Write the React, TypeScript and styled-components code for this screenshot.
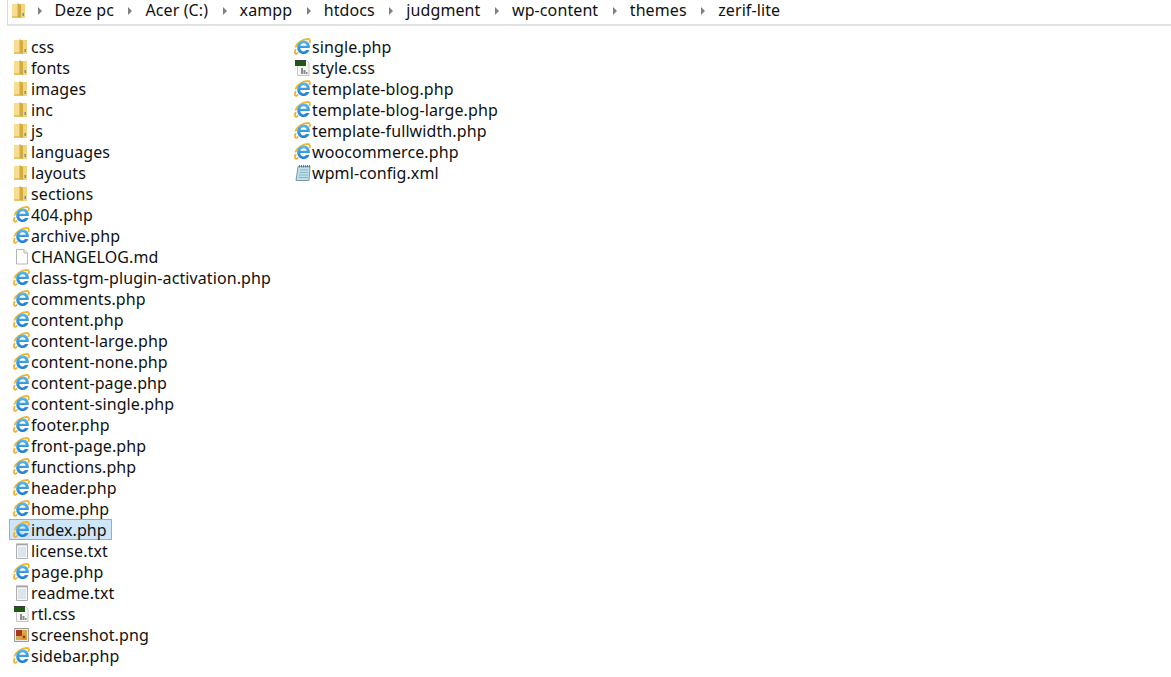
import React from "react";
import styled, { createGlobalStyle } from "styled-components";

type FileKind = "folder" | "ie" | "blank" | "text" | "css" | "image" | "xml";
type FileEntry = { name: string; kind: FileKind; selected?: boolean };

const crumbs = ["Deze pc", "Acer (C:)", "xampp", "htdocs", "judgment", "wp-content", "themes", "zerif-lite"];

const files: FileEntry[] = [
  { name: "css", kind: "folder" },
  { name: "fonts", kind: "folder" },
  { name: "images", kind: "folder" },
  { name: "inc", kind: "folder" },
  { name: "js", kind: "folder" },
  { name: "languages", kind: "folder" },
  { name: "layouts", kind: "folder" },
  { name: "sections", kind: "folder" },
  { name: "404.php", kind: "ie" },
  { name: "archive.php", kind: "ie" },
  { name: "CHANGELOG.md", kind: "blank" },
  { name: "class-tgm-plugin-activation.php", kind: "ie" },
  { name: "comments.php", kind: "ie" },
  { name: "content.php", kind: "ie" },
  { name: "content-large.php", kind: "ie" },
  { name: "content-none.php", kind: "ie" },
  { name: "content-page.php", kind: "ie" },
  { name: "content-single.php", kind: "ie" },
  { name: "footer.php", kind: "ie" },
  { name: "front-page.php", kind: "ie" },
  { name: "functions.php", kind: "ie" },
  { name: "header.php", kind: "ie" },
  { name: "home.php", kind: "ie" },
  { name: "index.php", kind: "ie", selected: true },
  { name: "license.txt", kind: "text" },
  { name: "page.php", kind: "ie" },
  { name: "readme.txt", kind: "text" },
  { name: "rtl.css", kind: "css" },
  { name: "screenshot.png", kind: "image" },
  { name: "sidebar.php", kind: "ie" },
  { name: "single.php", kind: "ie" },
  { name: "style.css", kind: "css" },
  { name: "template-blog.php", kind: "ie" },
  { name: "template-blog-large.php", kind: "ie" },
  { name: "template-fullwidth.php", kind: "ie" },
  { name: "woocommerce.php", kind: "ie" },
  { name: "wpml-config.xml", kind: "xml" },
];

const GlobalStyle = createGlobalStyle`
  html, body {
    margin: 0;
    padding: 0;
    background: #fff;
  }
  body {
    font-family: "Noto Sans", "Open Sans", sans-serif;
    color: #111;
    letter-spacing: 0.1px;
  }
`;

const Window = styled.div`
  width: 1171px;
  height: 677px;
  overflow: hidden;
  background: #fff;
`;

const AddressBar = styled.div`
  height: 24px;
  margin-left: 7px;
  padding-left: 3px;
  display: flex;
  align-items: center;
  border-left: 1px solid #d9d9d9;
  border-bottom: 2px solid #e1e1e1;
  font-size: 16px;
`;

const BarIcon = styled.span`
  display: flex;
  margin: -4px -5px 0 0;
`;

const Crumb = styled.span`
  display: flex;
  align-items: center;
  white-space: nowrap;
  margin-top: -5px;
`;

const Arrow = styled.span`
  width: 0;
  height: 0;
  margin: 3px 13px 0 14.5px;
  border-left: 4px solid #808080;
  border-top: 4px solid transparent;
  border-bottom: 4px solid transparent;
`;

const FileGrid = styled.div`
  display: grid;
  grid-auto-flow: column;
  grid-template-rows: repeat(30, 21px);
  grid-template-columns: 281px 281px;
  padding: 10px 0 0 9px;
`;

const Row = styled.div<{ $selected?: boolean }>`
  display: flex;
  align-items: center;
  justify-self: start;
  height: 21px;
  box-sizing: border-box;
  padding: 0 4px 0 3px;
  gap: 1px;
  font-size: 16px;
  white-space: nowrap;
  border: 1px solid ${(p) => (p.$selected ? "#7db6e6" : "transparent")};
  background: ${(p) => (p.$selected ? "#cde6f9" : "transparent")};
`;

const IconBox = styled.svg`
  flex: 0 0 auto;
  width: 17px;
  height: 17px;
`;

const FolderIcon = () => (
  <IconBox viewBox="0 0 17 17">
    <path d="M1 2h13v14H1z" fill="#efcf72" />
    <path d="M1 2h5.500l1 1v13H1z" fill="#f6dd92" />
    <path d="M1 14h6.500v2H1z" fill="#e6c466" />
    <path d="M6.500 1l3.500 2v13l-3.500-1z" fill="#d4ab3e" />
    <path d="M10 3h4v13h-4z" fill="#f2d67e" />
    <path d="M11.500 11h1.500v3h-1.500z" fill="#4f9ad6" />
  </IconBox>
);

const IeIcon = () => (
  <IconBox viewBox="0 0 17 17">
    <defs>
      <linearGradient id="ie-blue" x1="0" y1="0" x2="0" y2="1">
        <stop offset="0" stopColor="#5cb8ee" />
        <stop offset="1" stopColor="#1b7ed0" />
      </linearGradient>
    </defs>
    <path d="M1.300 9.500C3 4.800 8.500 1 13.800 1c2.500 0 2.600 2.400 1.500 4" fill="none" stroke="#eeb72c" strokeWidth="1.800" />
    <path d="M4.200 14.600c-1 1.400-2.400 1.500-3 .6-.5-.9-.2-2.300.6-4" fill="none" stroke="#eeb030" strokeWidth="1.800" />
    <path
      d="M6.300 10h9.500c.5-4.300-2.100-7.400-5.800-7.400-3.900 0-6.800 3.100-6.800 6.900 0 3.900 2.900 6.500 6.500 6.500 3 0 5.100-1.500 5.800-3.900h-3.600c-.5.9-1.200 1.300-2.200 1.300-1.900 0-3.300-1.300-3.400-3.400zM6.400 7.700c.2-1.500 1.600-2.400 3.300-2.400 1.600 0 2.900.9 3 2.400z"
      fill="url(#ie-blue)"
      fillRule="evenodd"
    />
  </IconBox>
);

const BlankIcon = () => (
  <IconBox viewBox="0 0 17 17">
    <path d="M3.500 1.500h7.500l3.500 3.500v11h-11z" fill="#fff" stroke="#b5b5b5" />
    <path d="M11 1.500V5h3.500" fill="#f0f0f0" stroke="#b5b5b5" />
  </IconBox>
);

const TextIcon = () => (
  <IconBox viewBox="0 0 17 17">
    <path d="M3.500 2.500h11v14h-11z" fill="#f6f6f6" stroke="#b0b0b0" />
    <path d="M4 1v2.500M6 1v2.500M8 1v2.500M10 1v2.500M12 1v2.500M14 1v2.500" stroke="#9a9a9a" />
    <path d="M5 6h8M5 8h8M5 10h8M5 12h8M5 14h8" stroke="#c2d3e2" />
  </IconBox>
);

const CssIcon = () => (
  <IconBox viewBox="0 0 17 17">
    <path d="M3.500 1.500h9l2.500 2.500v12.500H3.500z" fill="#f6f6f6" stroke="#c4c4c4" />
    <path d="M1 2h11v5H1z" fill="#1f5a10" />
    <path d="M1 1.500h11" stroke="#3a3a3a" />
    <path d="M7 9h2v6H7zM9.500 11h2v4h-2zM12 13h1.500v2H12z" fill="#8c8c8c" />
  </IconBox>
);

const ImageIcon = () => (
  <IconBox viewBox="0 0 17 17">
    <path d="M1.500 2.500h14v13h-14z" fill="#ececec" stroke="#9a9a9a" />
    <path d="M3 4h11v10H3z" fill="#d8a94c" />
    <path d="M3 4h6v6H3z" fill="#a93622" />
    <circle cx="11" cy="11" r="2.700" fill="#e88a1a" />
    <circle cx="11" cy="11" r="1" fill="#4a2810" />
  </IconBox>
);

const XmlIcon = () => (
  <IconBox viewBox="0 0 17 17">
    <path d="M4 2.500h12l-1 14H2z" fill="#bfe0ea" stroke="#7a9aa5" />
    <path d="M5.500 1v2.500M7.500 1v2.500M9.500 1v2.500M11.500 1v2.500M13.500 1v2.500M15.500 1v2.500" stroke="#6a7a80" />
    <path d="M6 6h8M5.500 8.500h8.500M5 11h9M4.500 13.500h9.500" stroke="#8ab6c4" />
  </IconBox>
);

const iconByKind: Record<FileKind, React.FC> = {
  folder: FolderIcon,
  ie: IeIcon,
  blank: BlankIcon,
  text: TextIcon,
  css: CssIcon,
  image: ImageIcon,
  xml: XmlIcon,
};

const App = () => {
  return (
    <Window>
      <GlobalStyle />
      <AddressBar>
        <BarIcon>
          <FolderIcon />
        </BarIcon>
        {crumbs.map((crumb) => (
          <Crumb key={crumb}>
            <Arrow />
            {crumb}
          </Crumb>
        ))}
      </AddressBar>
      <FileGrid>
        {files.map((file) => {
          const Icon = iconByKind[file.kind];
          return (
            <Row key={file.name} $selected={file.selected}>
              <Icon />
              {file.name}
            </Row>
          );
        })}
      </FileGrid>
    </Window>
  );
};

export default App;
